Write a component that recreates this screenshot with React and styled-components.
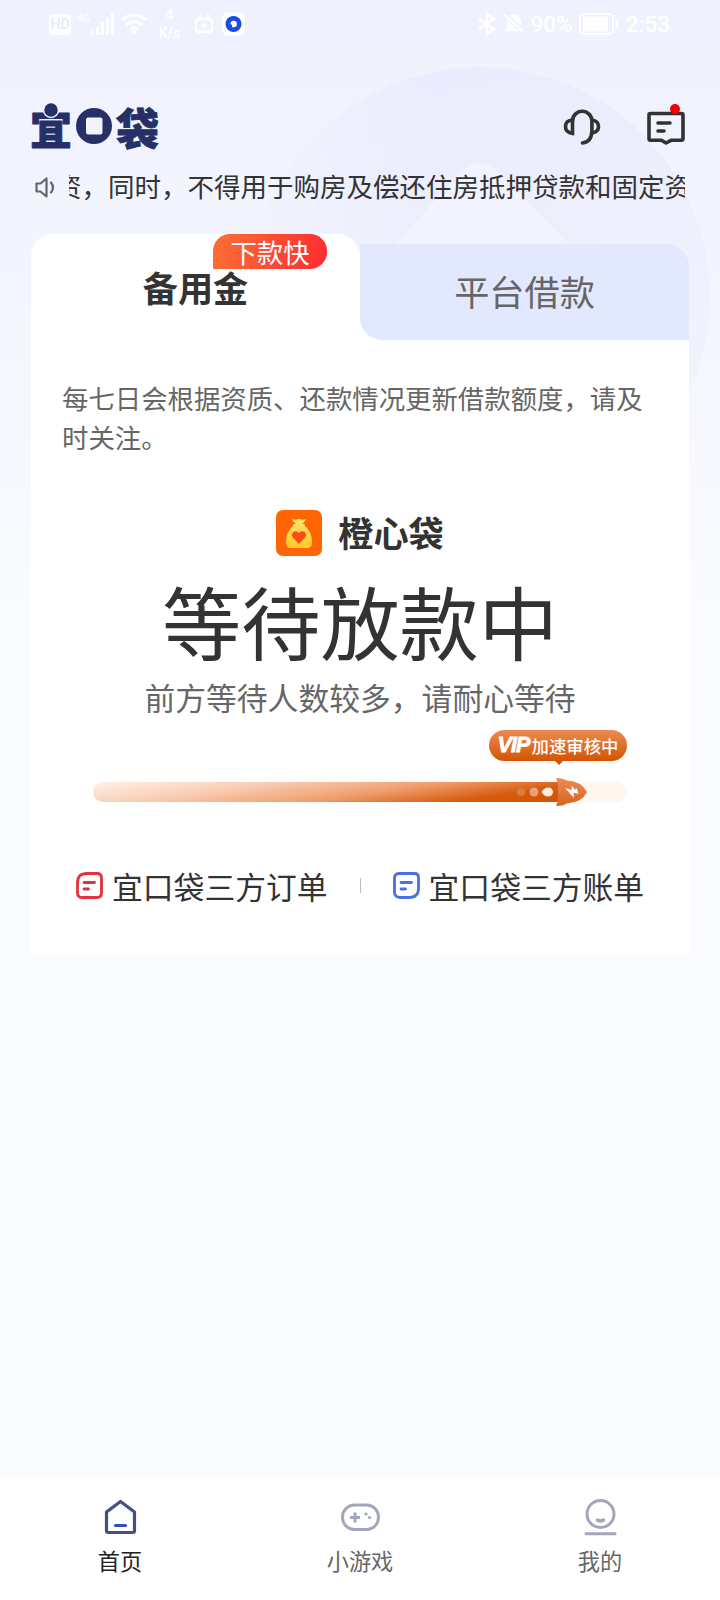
import styled, { createGlobalStyle } from "styled-components";

const GlobalStyle = createGlobalStyle`
  * {
    box-sizing: border-box;
  }

  body {
    margin: 0;
    font-family: "Noto Sans CJK SC", sans-serif;
    color: #333;
  }

  svg {
    display: block;
    flex: none;
  }
`;

const Page = styled.div`
  position: relative;
  display: flex;
  flex-flow: column nowrap;

  width: 720px;
  height: 1600px;
  overflow: hidden;
  background: linear-gradient(#eff1fe 0, #f3f5fe 260px, #fafbff 610px);
`;

const Backdrop = styled.svg`
  position: absolute;
  top: 0;
  left: 0;
`;

const StatusBar = styled.div`
  position: relative;
  display: flex;
  align-items: center;

  height: 48px;
  padding: 0 50px 0 49px;
  font-family: Roboto, sans-serif;
  font-size: 22.5px;
  font-weight: 500;
  color: #fff;
`;

const StatusGroup = styled.div`
  display: flex;
  align-items: center;
  gap: ${({ gap }) => gap}px;
  margin-left: ${({ end }) => (end ? "auto" : 0)};
`;

const Hd = styled.span`
  width: 22px;
  height: 21px;
  border-radius: 4px;
  background: #fff;

  font-size: 14px;
  font-weight: 500;
  line-height: 21px;
  text-align: center;
  color: #e6e9fb;
`;

const Signal = styled.div`
  display: flex;
  align-items: flex-start;
  font-size: 10px;
  line-height: 11px;
`;

const Speed = styled.div`
  width: 26px;
  margin: 0 5px 0 4px;
  font-size: 14px;
  line-height: 18px;
  text-align: center;
`;

const Header = styled.header`
  position: relative;
  display: flex;
  align-items: flex-start;

  height: 120px;
  padding: 41px 34px 0 28px;
`;

const Actions = styled.div`
  display: flex;
  gap: 46px;
  margin-left: auto;
  padding-top: 15px;
`;

const Ticker = styled.div`
  position: relative;
  display: flex;
  align-items: center;

  height: 38px;
  padding: 0 35px;
`;

const TickerText = styled.div`
  display: flex;
  justify-content: flex-end;

  width: 616px;
  margin: -3px 0 0 13px;
  overflow: hidden;

  font-size: 26.5px;
  line-height: 38px;
  white-space: nowrap;

  > span {
    margin-right: -6px;
  }
`;

const Card = styled.main`
  position: relative;
  margin: 28px 31px 0;
`;

const Tabs = styled.div`
  display: flex;
  align-items: flex-end;
  height: 106px;
`;

const ActiveTab = styled.div`
  position: relative;
  flex: 1;
  height: 106px;
  border-radius: 22px 22px 0 0;
  background: #fff;

  font-size: 35.2px;
  font-weight: 700;
  line-height: 106px;
  text-align: center;
`;

const TabWell = styled.div`
  flex: 1;
  height: 96px;
  border-radius: 0 22px 0 0;
  background: #fff;
`;

const Tab = styled.div`
  height: 96px;
  border-radius: 0 22px 0 22px;
  background: #e2e8fe;

  font-size: 35.2px;
  line-height: 94px;
  text-align: center;
  color: #666;
`;

const TabBadge = styled.span`
  position: absolute;
  top: 0;
  left: 182px;

  width: 114px;
  height: 35px;
  border-radius: 17px 17px 17px 0;
  background: linear-gradient(100deg, #fb6f33, #ff2b33);

  font-size: 26.4px;
  font-weight: 400;
  line-height: 36px;
  color: #fff;
`;

const Panel = styled.section`
  display: flex;
  flex-flow: column nowrap;

  height: 615px;
  padding: 38px 31px 0;
  border-radius: 0 0 5px 5px;
  background: #fff;
`;

const Notice = styled.p`
  margin: 0;
  font-size: 26.4px;
  line-height: 39px;
  color: #666;
`;

const Product = styled.div`
  display: flex;
  justify-content: center;
  align-items: center;
  gap: 16px;

  height: 46px;
  margin-top: 54px;
  font-size: 35.2px;
  font-weight: 700;

  > span {
    margin-top: -3px;
  }
`;

const Status = styled.h1`
  height: 110px;
  margin: 9px 0 0;
  font-size: 79.2px;
  font-weight: 400;
  line-height: 110px;
  text-align: center;
`;

const Hint = styled.div`
  height: 47px;
  font-size: 30.8px;
  line-height: 44px;
  text-align: center;
  color: #666;
`;

const Vip = styled.div`
  position: relative;
  display: flex;
  justify-content: center;
  align-items: center;
  gap: 2px;

  width: 138px;
  height: 31px;
  margin: 8px 0 0 427px;
  border-radius: 16px;
  background: linear-gradient(#ec8b50, #d25505);

  font-size: 17.4px;
  font-weight: 500;
  line-height: 31px;
  white-space: nowrap;
  color: #fff;

  &::after {
    content: "";
    position: absolute;
    top: 30px;
    left: 65px;
    border: 5px solid transparent;
    border-top-color: #d25505;
    border-bottom: 0;
  }

  > b {
    font-family: "Liberation Sans", sans-serif;
    font-size: 21.5px;
    font-style: italic;
    letter-spacing: -0.9px;
    -webkit-text-stroke: 0.8px #fff;
  }
`;

const Progress = styled.div`
  display: flex;
  align-items: center;

  width: 534px;
  height: 20px;
  margin: 21px 0 0 31px;
  border-radius: 10px;
  background: #fff6f0;
`;

const Bar = styled.div`
  display: flex;
  justify-content: flex-end;
  align-items: center;

  width: 468px;
  height: 20px;
  padding-right: 4px;
  border-radius: 10px 0 0 10px;
  background: linear-gradient(
    172deg,
    #fff0e7 0%,
    #f9cdb3 30%,
    #ef9e6c 58%,
    #d65b0c 82%,
    #d25400 100%
  );
`;

const Rocket = styled.svg`
  margin-left: -5px;
`;

const Links = styled.div`
  display: flex;
  align-items: center;

  height: 44px;
  margin: 62px 0 0 14px;
  font-size: 30.8px;
  line-height: 44px;
  white-space: nowrap;
`;

const Link = styled.div`
  display: flex;
  align-items: center;
  gap: 9px;

  > svg {
    margin-top: -2px;
  }
`;

const Divider = styled.i`
  width: 1px;
  height: 15px;
  margin: -2px 32px 0;
  background: #bbb;
`;

const Nav = styled.nav`
  position: relative;
  display: flex;
  height: 123px;
  margin-top: auto;
  background: #fff;
`;

const NavItem = styled.div`
  display: flex;
  flex-flow: column nowrap;
  align-items: center;
  flex: 1;

  padding-top: 20px;
  font-size: 22.2px;
  line-height: 32px;
  color: ${({ active }) => (active ? "#222" : "#666")};

  > svg {
    margin-bottom: 7px;
  }
`;

const DocIcon = ({ color, flip }) => (
  <svg width="27" height="27" viewBox="0 0 27 27" fill="none" stroke={color}>
    <path
      d={
        flip
          ? "M6 1.5h15.500Q25.5 1.5 25.5 5.500v11Q25.5 25.5 16 25.5H7Q1.5 25.5 1.5 20V6Q1.5 1.5 6 1.5Z"
          : "M11 1.5H21Q25.5 1.5 25.5 6V21Q25.5 25.5 21 25.5H6Q1.5 25.5 1.5 21V11Q1.5 1.5 11 1.5Z"
      }
      strokeWidth="2.8"
    />
    <path d="M8 10.500h10.500M8 17h4.500" strokeWidth="2.8" strokeLinecap="round" />
  </svg>
);

const Logo = () => (
  <svg width="134" height="72" viewBox="-3 -14 134 72" fill="#262f66">
    <g
      fontFamily="Noto Sans CJK SC"
      fontWeight="900"
      stroke="#262f66"
      strokeWidth="0.8"
      strokeLinejoin="round"
    >
      <text x="-1" y="42" fontSize="42">
        宜
      </text>
      <text x="85" y="42" fontSize="43">
        袋
      </text>
    </g>
    <circle cx="20" cy="7" r="7.500" stroke="#f0f2fe" strokeWidth="1.500" />
    <path
      fillRule="evenodd"
      d="M63 5a18 18 0 1 1 0 36a18 18 0 1 1 0-36ZM57 14.500q-2 0-2 2v13q0 2 2 2h12.500q2 0 2-2V16.500q0-2-2-2Z"
    />
  </svg>
);

export default function App() {
  return (
    <>
      <GlobalStyle />
      <Page>
        <Backdrop width="720" height="620" viewBox="0 0 720 620">
          <defs>
            <linearGradient id="disc" x1="0.3" y1="0" x2="0.5" y2="1">
              <stop offset="0" stopColor="#eaebfc" />
              <stop offset="1" stopColor="#f3f5fe" />
            </linearGradient>
            <linearGradient id="discFade">
              <stop offset="0" stopColor="#f1f3fe" />
              <stop offset="0.4" stopColor="#f1f3fe" stopOpacity="0" />
            </linearGradient>
          </defs>
          <circle cx="480" cy="297" r="230" fill="url(#disc)" />
          <circle cx="480" cy="297" r="230" fill="url(#discFade)" />
          <path
            d="M385 255L462 171Q479 155 497 171L580 255V330H385Z"
            fill="#f1f3fe"
          />
        </Backdrop>

        <StatusBar>
          <StatusGroup gap={6}>
            <Hd>HD</Hd>
            <Signal>
              4G
              <svg width="25" height="22" fill="#fff">
                <path d="M1 18h3v4H1zM6 14h3v8H6zM11 9h3v13h-3zM16 5h3v17h-3zM21 0h3v22h-3z" />
              </svg>
            </Signal>
            <svg width="26" height="23" fill="none" stroke="#fff">
              <path
                d="M1 7Q13-3 25 7M5 12Q13 5 21 12M9 16Q13 13 17 16"
                strokeWidth="3"
              />
              <circle cx="13" cy="19" r="2" fill="#fff" />
            </svg>
            <Speed>
              4<br />
              K/s
            </Speed>
            <svg
              width="20"
              height="20"
              fill="none"
              stroke="#fff"
              strokeWidth="2.4"
            >
              <path d="M5 1l3 3M15 1l-3 3" />
              <rect x="2" y="5" width="16" height="13" rx="3" />
              <path d="M8 8l5 3.5L8 15Z" fill="#fff" stroke="none" />
            </svg>
            <svg width="26" height="24" viewBox="-2 0 26 24">
              <rect width="23" height="23" y="0.5" rx="6" fill="#fff" />
              <circle cx="11.5" cy="12" r="8" fill="#1d4be0" />
              <path d="M8.500 12a3.200 3.200 0 1 1 3.200 3.200H10V13Z" fill="#fff" />
            </svg>
          </StatusGroup>
          <StatusGroup gap={6} end>
            <svg width="20" height="24" fill="none" stroke="#fff">
              <path d="M2 7l15 10-7 5V2l7 5L2 17" strokeWidth="2.6" />
            </svg>
            <svg width="22" height="22" fill="#fff">
              <path d="M2 1l19 17-1.500 1.500L.5 2.500ZM7 3q1-1 3-1.500Q11 0 12 1.500 18 3 18 9v4ZM4 7l12 11H1l3-4Z" />
            </svg>
            <span>90%</span>
            <svg width="41" height="22" fill="none" stroke="#fff">
              <rect x="1" y="1" width="33" height="20" rx="4" strokeWidth="2" />
              <rect x="4.500" y="4" width="24" height="14" fill="#fff" />
              <path d="M38 7v8" strokeWidth="3" />
            </svg>
            <span>2:53</span>
          </StatusGroup>
        </StatusBar>

        <Header>
          <Logo />
          <Actions>
            <svg
              width="38"
              height="46"
              viewBox="0.500 0 38 46"
              fill="none"
              stroke="#333"
              strokeWidth="3.6"
              strokeLinecap="round"
            >
              <path d="M10 17a9.700 9.700 0 0 1 19.400 0v10Q29 38 20 39" />
              <path d="M10 16v13.500Q3 28.500 3 22.500T10 16ZM29.400 16Q36 17 36 22.500T29.400 29" />
            </svg>
            <svg
              width="39"
              height="46"
              viewBox="0 0 39 46"
              fill="none"
              stroke="#333"
              strokeWidth="3.6"
              strokeLinecap="round"
              strokeLinejoin="round"
            >
              <path d="M3.500 9.500H34.500Q36 9.500 36 11V34.500Q36 36.300 34.500 36.300H24L19 39 14.500 36.300H3.500Q2 36.300 2 34.500V11Q2 9.500 3.500 9.500Z" />
              <path d="M11 19h12M11 27h6" />
              <circle cx="28" cy="5" r="5" fill="#f40000" stroke="none" />
            </svg>
          </Actions>
        </Header>

        <Ticker>
          <svg
            width="21"
            height="22"
            viewBox="0.500 -1 21 22"
            fill="none"
            stroke="#666"
            strokeWidth="2.2"
            strokeLinejoin="round"
            strokeLinecap="round"
          >
            <path d="M2 6.500h4l6-5v18l-6-5H2ZM16.500 5.500q4 5 0 10" />
          </svg>
          <TickerText>
            <span>资，同时，不得用于购房及偿还住房抵押贷款和固定资</span>
          </TickerText>
        </Ticker>

        <Card>
          <Tabs>
            <ActiveTab>
              备用金
              <TabBadge>下款快</TabBadge>
            </ActiveTab>
            <TabWell>
              <Tab>平台借款</Tab>
            </TabWell>
          </Tabs>
          <Panel>
            <Notice>每七日会根据资质、还款情况更新借款额度，请及时关注。</Notice>
            <Product>
              <svg width="46" height="46">
                <defs>
                  <linearGradient id="bag" x2="0" y2="1">
                    <stop stopColor="#ffe36a" />
                    <stop offset="1" stopColor="#ffc928" />
                  </linearGradient>
                </defs>
                <rect width="46" height="46" rx="7" fill="#ff6505" />
                <path
                  d="M16 9q3 1 5 .5 2-1.500 4 0 3 .5 5-.500-1 3-4 5h-6q-3-2-4-5ZM18 14h10q1 0 1 2 7 6 7 16 0 6-5 6H15q-5 0-5-6 0-10 7-16 0-2 1-2Z"
                  fill="url(#bag)"
                />
                <path
                  d="M23 34l-6-6.500q-2.500-3 .5-5.500 3-2 5.500 1 2.500-3 5.500-1 3 2.500.5 5.500Z"
                  fill="#fb4b12"
                />
              </svg>
              <span>橙心袋</span>
            </Product>
            <Status>等待放款中</Status>
            <Hint>前方等待人数较多，请耐心等待</Hint>
            <Vip>
              <b>VIP</b>加速审核中
            </Vip>
            <Progress>
              <Bar>
                <svg width="44" height="14">
                  <circle cx="8" cy="7" r="4" fill="#dc7b42" />
                  <circle cx="21" cy="7" r="4.500" fill="#e6a07a" />
                  <path
                    d="M28.500 7Q31 2.500 35.500 2.500a4.500 4.500 0 0 1 0 9Q31 11.500 28.500 7Z"
                    fill="#ffeadd"
                  />
                </svg>
              </Bar>
              <Rocket width="32" height="28" viewBox="0 0 32 28">
                <defs>
                  <linearGradient id="rocket" x2="0" y2="1">
                    <stop stopColor="#ec8c54" />
                    <stop offset="1" stopColor="#d86420" />
                  </linearGradient>
                </defs>
                <path
                  d="M0 0Q7 0 11 2.500 26 3.500 31 14 26 24.500 11 25.500 7 28 0 28q2-4 2-8V8Q2 4 0 0Z"
                  fill="url(#rocket)"
                />
                <path d="M9 10l6.500 2L16 8l7 8-5.500-1.200L18 20Z" fill="#fff" />
                <path d="M17 14l4-4 1 5Z" fill="#fff" />
              </Rocket>
            </Progress>
            <Links>
              <Link>
                <DocIcon color="#e0333f" />
                宜口袋三方订单
              </Link>
              <Divider />
              <Link>
                <DocIcon color="#4a6fe0" flip />
                宜口袋三方账单
              </Link>
            </Links>
          </Panel>
        </Card>

        <Nav>
          <NavItem active>
            <svg
              width="40"
              height="40"
              fill="none"
              stroke="#454f80"
              strokeWidth="3.2"
              strokeLinejoin="round"
            >
              <path d="M20.500 4.500L34.500 15V33.500Q34.500 35.500 32.500 35.500H8.500Q6.500 35.500 6.500 33.500V15Z" />
              <path d="M15.500 28.500h10" stroke="#2f4fc0" strokeLinecap="round" />
            </svg>
            首页
          </NavItem>
          <NavItem>
            <svg
              width="40"
              height="40"
              fill="none"
              stroke="#a2a6bc"
              strokeWidth="3"
            >
              <rect x="2.500" y="8" width="36" height="24.500" rx="12" />
              <path d="M10 20.500h10M15 15.500v10" />
              <circle cx="26" cy="17" r="1.600" fill="#a2a6bc" stroke="none" />
              <circle cx="29.500" cy="20.500" r="1.600" fill="#a2a6bc" stroke="none" />
            </svg>
            小游戏
          </NavItem>
          <NavItem>
            <svg
              width="40"
              height="40"
              fill="none"
              stroke="#a2a6bc"
              strokeWidth="3"
              strokeLinecap="round"
            >
              <circle cx="20.500" cy="17" r="13.500" />
              <path d="M17.500 23q3 2 6 0" strokeWidth="3.500" />
              <path d="M6 36.800h29" />
            </svg>
            我的
          </NavItem>
        </Nav>
      </Page>
    </>
  );
}
